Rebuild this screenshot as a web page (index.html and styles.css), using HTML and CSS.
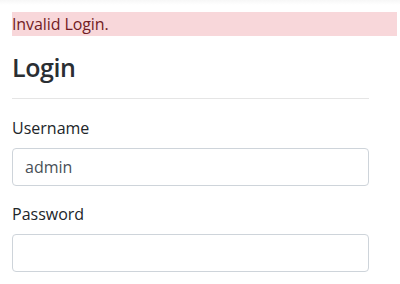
FILE: index.html
```html
<!DOCTYPE html>
<html lang="en">
<head>
  <meta charset="UTF-8" />
  <title>Login</title>
  <link rel="stylesheet" href="styles.css">
</head>
<body>
  <div class="alert">Invalid Login.</div>
  <div class="container">
    <h3>Login</h3>
    <hr />
    <form>
      <div class="form-group">
        <label for="username">Username</label>
        <input type="text" id="username" class="form-control" value="admin" />
      </div>
      <div class="form-group">
        <label for="password">Password</label>
        <input type="password" id="password" class="form-control" />
      </div>
    </form>
  </div>
</body>
</html>
```
FILE: styles.css
```css
body {
  margin: 0;
  padding: 12px 0 0;
  font-family: 'Open Sans', sans-serif;
  font-size: 16px;
  line-height: 1.5;
  color: #212529;
  background: linear-gradient(#f7f7f7, #fff 5px);
}

.alert {
  margin: 0 3px 0 12px;
  background: #f8d7da;
  color: #721c24;
  height: 24px;
  letter-spacing: -0.1px;
}

.container {
  width: 357px;
  margin-left: 12px;
}

h3 {
  font-size: 25px;
  font-weight: 600;
  letter-spacing: -0.4px;
  line-height: 1.2;
  margin: 16px 0 8px;
  color: #2a2e33;
}

hr {
  border: 0;
  border-top: 1px solid rgba(0,0,0,0.1);
  margin: 16px 0 17px;
}

label {
  display: block;
  margin-bottom: 8px;
}

.form-group {
  margin-bottom: 16px;
}

.form-control {
  display: block;
  box-sizing: border-box;
  width: 100%;
  height: 38px;
  padding: 6px 12px;
  font-family: inherit;
  font-size: 16px;
  color: #495057;
  border: 1px solid #ced4da;
  border-radius: 4px;
  background: #fff;
}
```
